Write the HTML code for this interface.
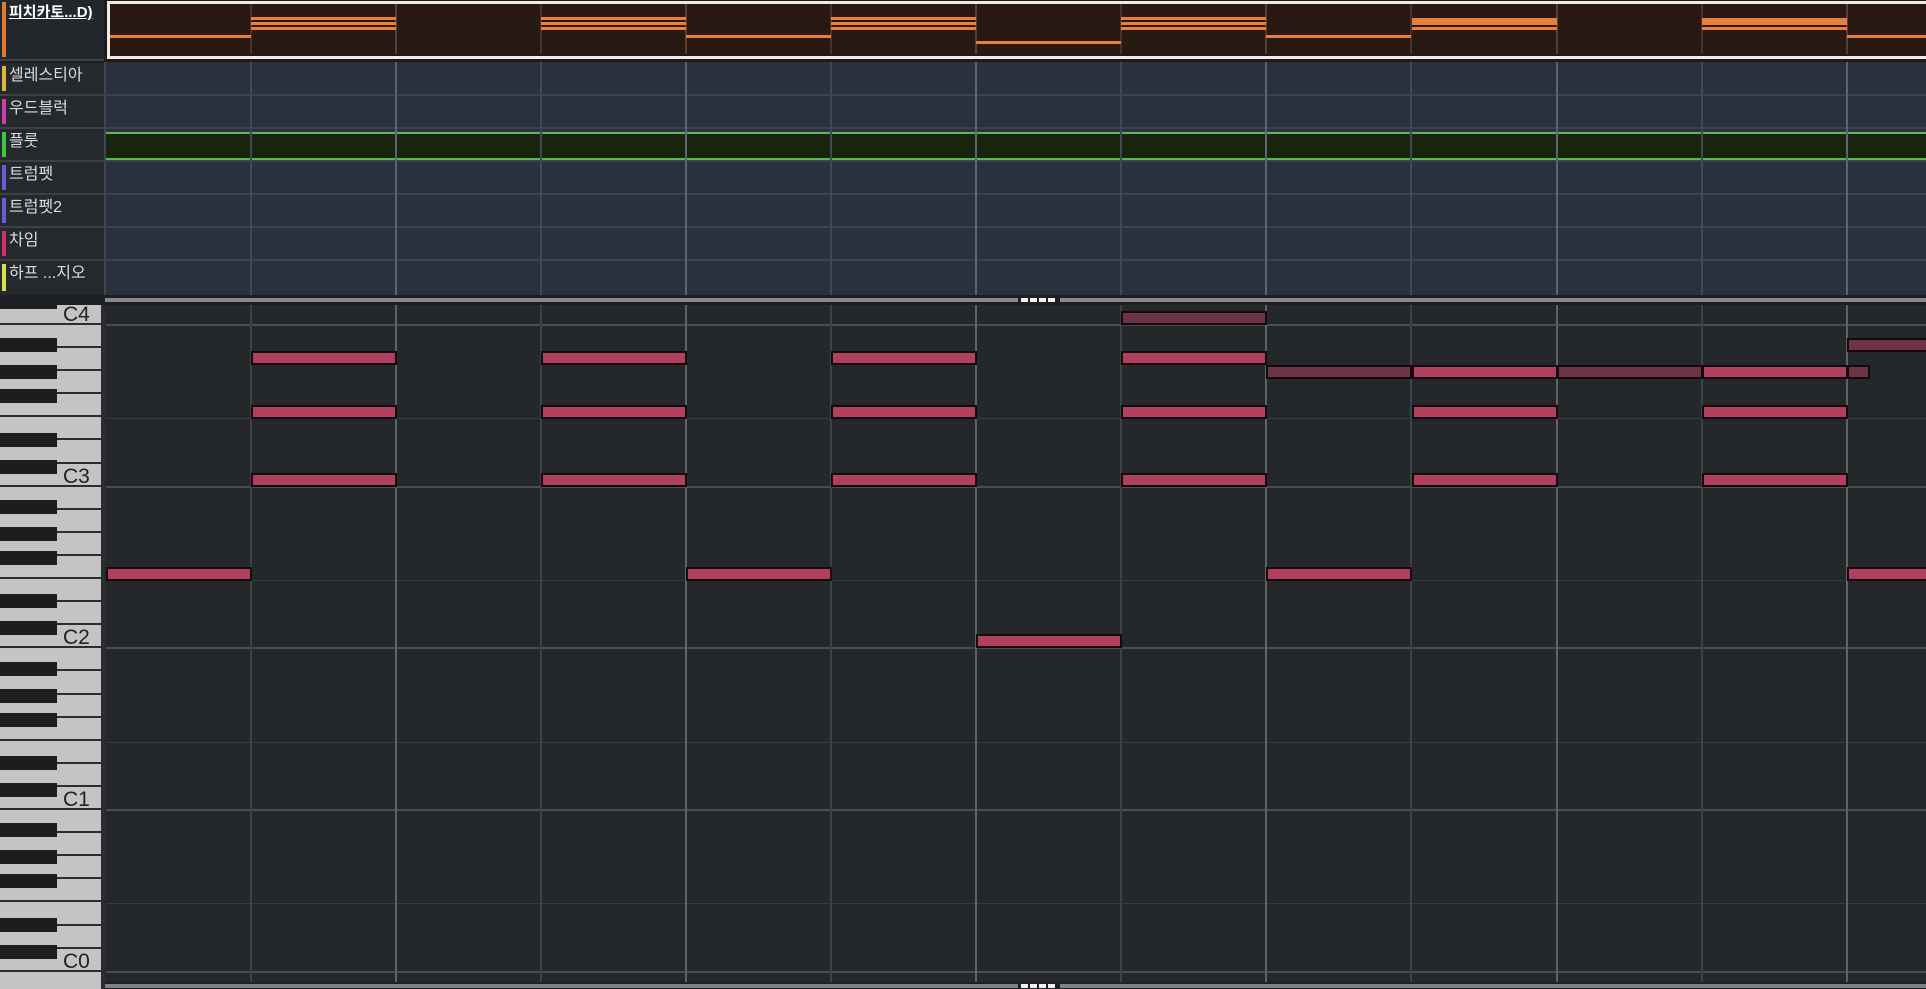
<!DOCTYPE html>
<html><head><meta charset="utf-8">
<style>
*{margin:0;padding:0;box-sizing:border-box}
body{width:1926px;height:989px;background:#1d1f22;position:relative;overflow:hidden;font-family:"Liberation Sans","Noto Sans CJK KR",sans-serif}
div{position:absolute}
.lbl{left:0;width:104px;background:#25282c;border-bottom:2px solid #3d4046;color:#dcdcdc;font-size:16px;padding:2px 0 0 9px;line-height:22px}
.bar{left:2px;top:3px;width:4px;bottom:3px}
.trk{left:105px;right:0;background:#29313c;border-bottom:2px solid #3a434f}
.v{width:2px}
.note{height:14px;background:#b0405e;border:2px solid #14090c}
.dk{background:#6c3444}
.ol{height:3px;background:#e87f3c}
.wk{left:0;width:101px;background:#c4c4c4;border-bottom:2px solid #2c2d30}
.bk{left:0;width:57px;height:14px;background:#1c1d1f}
.cl{left:63px;font-size:21px;color:#222;width:27px;text-align:left}
</style></head><body>
<div style="left:0;top:0;width:104px;height:61px;background:#23262a;border-bottom:2px solid #3d4046">
 <div class="bar" style="background:#e07a30;top:2px;bottom:2px"></div>
 <div style="left:9px;top:1px;color:#fff;font-size:15px;font-weight:bold;text-decoration:underline">피치카토...D)</div>
</div>
<div class="lbl" style="top:63px;height:33px"><div class="bar" style="background:#e0b438"></div>셀레스티아</div>
<div class="lbl" style="top:96px;height:33px"><div class="bar" style="background:#d03cb0"></div>우드블럭</div>
<div class="lbl" style="top:129px;height:33px"><div class="bar" style="background:#3cc83c"></div>플룻</div>
<div class="lbl" style="top:162px;height:33px"><div class="bar" style="background:#6a5ad8"></div>트럼펫</div>
<div class="lbl" style="top:195px;height:33px"><div class="bar" style="background:#6a5ad8"></div>트럼펫2</div>
<div class="lbl" style="top:228px;height:33px"><div class="bar" style="background:#d0306c"></div>차임</div>
<div class="lbl" style="top:261px;height:34px;border-bottom:none"><div class="bar" style="background:#d8e448;bottom:4px"></div>하프 ...지오</div>

<div style="left:105px;top:0;right:0;height:62px;background:#221a16"></div>
<div id="clip" style="left:107px;top:1px;right:0;height:58px;border:3px solid #eeeae4;border-right:none;background:#281913"></div>
<div class="trk" style="top:62px;height:34px"></div>
<div class="trk" style="top:96px;height:33px"></div>
<div class="trk" style="top:129px;height:33px"></div>
<div class="trk" style="top:162px;height:33px"></div>
<div class="trk" style="top:195px;height:33px"></div>
<div class="trk" style="top:228px;height:33px"></div>
<div class="trk" style="top:261px;height:34px;border-bottom:none"></div>
<div style="left:105px;right:0;top:132px;height:28px;background:#19240f;border-top:2px solid #5cb852;border-bottom:2px solid #5cb852"></div>
<div style="left:104px;top:62px;width:2px;height:233px;background:#3e4650"></div>
<div style="left:105px;right:0;top:298px;height:4px;background:#87898c"></div>
<div style="left:1018px;top:298px;width:42px;height:4px;background:#1d1f22"></div>
<div style="left:1021px;top:298px;width:7px;height:4px;background:#f0f0f0"></div>
<div style="left:1030px;top:298px;width:7px;height:4px;background:#f0f0f0"></div>
<div style="left:1039px;top:298px;width:7px;height:4px;background:#f0f0f0"></div>
<div style="left:1048px;top:298px;width:7px;height:4px;background:#f0f0f0"></div>
<div id="grid" style="left:105px;right:0;top:305px;height:677px;background:#25282b"></div>
<div style="left:101px;top:305px;width:4px;height:684px;background:#2a2c2f"></div>
<div style="left:105px;right:0;top:984px;height:4px;background:#7e8083"></div>
<div style="left:1018px;top:984px;width:42px;height:4px;background:#1d1f22"></div>
<div style="left:1021px;top:984px;width:7px;height:4px;background:#f0f0f0"></div>
<div style="left:1030px;top:984px;width:7px;height:4px;background:#f0f0f0"></div>
<div style="left:1039px;top:984px;width:7px;height:4px;background:#f0f0f0"></div>
<div style="left:1048px;top:984px;width:7px;height:4px;background:#f0f0f0"></div>
<div id="keys" style="left:0;top:305px;width:101px;height:684px;background:#c4c4c4;overflow:hidden"></div>
<div id="lay" style="left:0;top:0;width:1926px;height:989px"></div>
<script>
var S=13.47,T=311.5,B=function(i){return 105.6+145.1*i};
var sh='',ln='',nt='';
for(var p=-1;p<50;p++){var y=T+S*p;var semi=((-p)%12+12)%12;
 var isB=[1,3,6,8,10].indexOf(semi)>=0;
 var top=Math.max(y,305),hh=y+S-top;
 if(isB&&hh>0&&y<982)sh+='<div style="left:106px;right:0;top:'+top.toFixed(1)+'px;height:'+hh.toFixed(1)+'px;background:#212326"></div>';
 if(semi==0&&y+S<983)sh+='<div style="left:106px;right:0;top:'+(y+S-1).toFixed(1)+'px;height:2px;background:#4a4d51"></div>';
 if(semi==5)sh+='<div style="left:106px;right:0;top:'+(y+S-1).toFixed(1)+'px;height:1px;background:#383b3f"></div>';}
for(var i=1;i<=12;i++){var x=Math.round(B(i))-1,br=i%2==0;
 ln+='<div class="v" style="left:'+x+'px;top:4px;height:50px;background:'+(br?'#5a3e34':'#4a322a')+'"></div>';
 ln+='<div class="v" style="left:'+x+'px;top:62px;height:233px;background:'+(br?'#5b6470':'#3f4853')+'"></div>';
 ln+='<div class="v" style="left:'+x+'px;top:305px;height:677px;background:'+(br?'#606366':'#3e4145')+'"></div>';}
var N=[[0,1,19],[1,2,3],[1,2,7],[1,2,12],[3,4,3],[3,4,7],[3,4,12],[4,5,19],[5,6,3],[5,6,7],[5,6,12],[6,7,24],
[7,8,0,1],[7,8,3],[7,8,7],[7,8,12],[8,9,19],[8,9,4,1],[9,10,4],[9,10,7],[9,10,12],[10,11,4,1],[11,12,4],[11,12,7],[11,12,12],
[12,13.5,2,1],[12,12.15,4,1],[12,13.5,19]];
N.forEach(function(n){var x=B(n[0]),w=B(n[1])-x,y=T+S*n[2];
 nt+='<div class="note'+(n[3]?' dk':'')+'" style="left:'+x.toFixed(1)+'px;width:'+(w+1).toFixed(1)+'px;top:'+(y-0.5).toFixed(1)+'px"></div>';
 if(!n[3]){var cy=13.6+1.13*n[2];var x0=Math.max(x,110);
  nt+='<div class="ol" style="left:'+x0.toFixed(1)+'px;width:'+(x+w-x0).toFixed(1)+'px;top:'+cy.toFixed(1)+'px;height:'+(n[2]==4?5:3)+'px"></div>';}
});
var k='';
for(var o=0;o<5;o++){var cb=325+161.7*o-305;
 for(var j=0;j<7;j++){var bot=cb-23.1*j;k+='<div class="wk" style="top:'+(bot-23.1).toFixed(1)+'px;height:23.1px"></div>';}
 k+='<div class="cl" style="top:'+(cb-22).toFixed(1)+'px">C'+(4-o)+'</div>';}
k+='<div class="bk" style="top:-10px"></div>';
for(var p=0;p<50;p++){var semi=((-p)%12+12)%12;if([1,3,6,8,10].indexOf(semi)>=0){var y=T+S*p-305;if(semi==6)y-=3;k+='<div class="bk" style="top:'+y.toFixed(1)+'px"></div>';}}
document.getElementById('keys').innerHTML=k;
document.getElementById('lay').innerHTML=sh+ln+nt;
</script>
</body></html>
